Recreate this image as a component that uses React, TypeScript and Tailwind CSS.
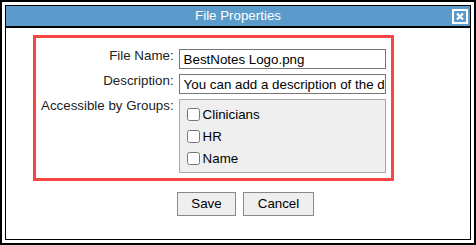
import React from 'react';

const groups = ["Clinicians", "HR", "Name"];

export default function App() {
  return (
    <div className="w-[476px] h-[245px] border-2 border-black bg-white p-[3px] font-['Liberation_Sans',Arial,sans-serif] text-[#222]">
      <div className="h-full border border-black flex flex-col">
        {/* title bar */}
        <div className="relative h-[22px] bg-[#5a9bcb] border-b-2 border-black flex items-center justify-center">
          <span className="text-white text-[13.33px] leading-none">File Properties</span>
          <div className="absolute right-[2px] top-[3px] w-[16px] h-[15px] border-2 border-white bg-[#5a9bcb] flex items-center justify-center">
            <svg width="8" height="7" viewBox="0 0 8 7">
              <path d="M1 0.5 L7 6.5 M7 0.5 L1 6.5" stroke="white" strokeWidth="2.2" />
            </svg>
          </div>
        </div>

        {/* form, boxed in red */}
        <div className="ml-[27px] mt-[7px] w-[361px] h-[146px] border-[3px] border-[#fb4545] pt-[11px] pl-[5px] pr-[6px] pb-[4px]">
          <div className="grid grid-cols-[1fr_207px] gap-x-[5px] gap-y-[5px] text-[13.33px]">
            <label className="text-right leading-[14px]">File Name:</label>
            <input
              type="text"
              defaultValue="BestNotes Logo.png"
              className="h-[20px] border border-[#767676] pl-[4px] text-[13.33px] text-black outline-none"
            />
            <label className="text-right leading-[14px]">Description:</label>
            <input
              type="text"
              defaultValue="You can add a description of the document here"
              className="h-[20px] border border-[#767676] pl-[4px] text-[13.33px] text-black outline-none"
            />
            <label className="text-right leading-[14px] whitespace-nowrap">Accessible by Groups:</label>
            <div className="h-[74px] border border-[#a9a9a9] bg-[#efefef] pl-[7px] pt-[3px] flex flex-col">
              {groups.map((g) => (
                <label key={g} className="h-[22px] flex items-center gap-[3px] text-[13.33px] text-black">
                  <input type="checkbox" className="w-[13px] h-[13px] m-0" />
                  <span className="pt-[2px]">{g}</span>
                </label>
              ))}
            </div>
          </div>
        </div>

        {/* buttons */}
        <div className="pl-[171px] mt-[11px] flex gap-[7px]">
          <button className="w-[59px] h-[24px] border border-[#8a8a8a] bg-[#efefef] text-[13.33px] text-black">Save</button>
          <button className="w-[71px] h-[24px] border border-[#8a8a8a] bg-[#efefef] text-[13.33px] text-black">Cancel</button>
        </div>
      </div>
    </div>
  );
}
